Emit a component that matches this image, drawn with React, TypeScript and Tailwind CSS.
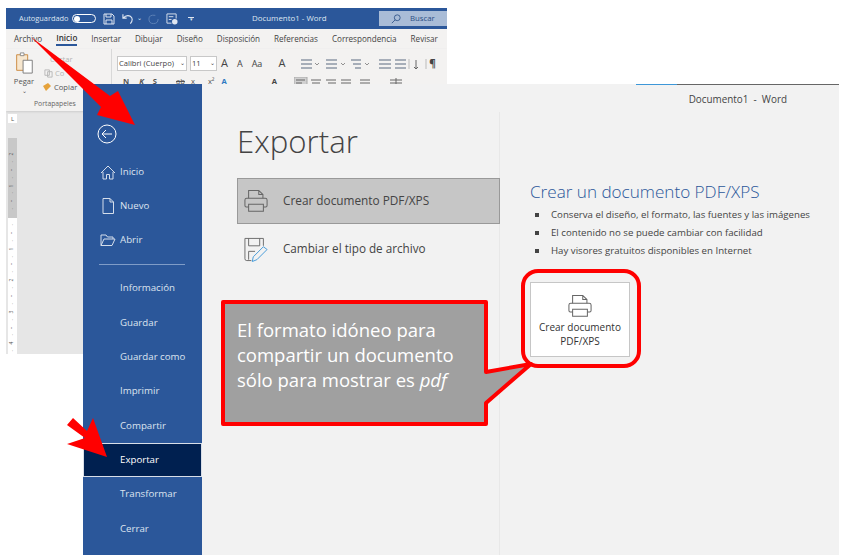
const sans = "font-['Open_Sans','Noto_Sans',sans-serif]";

const tabs = ["Archivo", "Inicio", "Insertar", "Dibujar", "Diseño", "Disposición", "Referencias", "Correspondencia", "Revisar"];
const topItems = [
  { name: "Inicio", icon: <path d="M2 10 L9 3 L16 10 M4 9 V16 H7.5 V11.5 H10.5 V16 H14 V9" /> },
  { name: "Nuevo", icon: <path d="M4 1.5 H11 L14.5 5 V16.5 H4 Z M11 1.5 V5 H14.5" /> },
  { name: "Abrir", icon: <path d="M2 14.5 V4 H7 L8.5 6 H14 V8 M2 14.5 H13 L16 8 H5 L2 14.5" /> },
];
const bottomItems = ["Información", "Guardar", "Guardar como", "Imprimir", "Compartir", "Exportar", "Transformar", "Cerrar"];
const bullets = [
  "Conserva el diseño, el formato, las fuentes y las imágenes",
  "El contenido no se puede cambiar con facilidad",
  "Hay visores gratuitos disponibles en Internet",
];
const rulerMarks = ["2", "·", "–", "·", "1", "·", "–", "·", "", "·", "–", "·", "1", "·", "–", "·", "2", "·", "–", "·", "3", "·", "–", "·", "4", "·"];

function PrinterIcon({ className }: { className: string }) {
  return (
    <svg viewBox="0 0 26 26" fill="none" stroke="#666" strokeWidth="1.1" className={className}>
      <path d="M5 10 V1.5 H16 L20.5 6 V10 M16 1.5 V6 H20.5" />
      <path d="M5 19.5 H2.5 Q1 19.5 1 18 V12 Q1 10 3 10 H23 Q25 10 25 12 V18 Q25 19.5 23.5 19.5 H21" />
      <path d="M5 16.5 H21 V24 H5 Z" />
    </svg>
  );
}

function BackWindow() {
  return (
    <div className={`absolute left-[6px] top-[8px] flex h-[346px] w-[441px] flex-col overflow-hidden bg-[#e6e6e6] ${sans}`}>
      {/* title bar */}
      <div className="flex h-[21px] shrink-0 items-center bg-[#2b579a] pl-[13px] text-[8.1px] text-[#dfe6f1]">
        <span className="w-[53px] text-[7.4px]">Autoguardado</span>
        <span className="flex h-[9px] w-[24px] items-center rounded-full border border-white pl-[1px]">
          <span className="h-[6px] w-[6px] rounded-full bg-white" />
        </span>
        <svg viewBox="0 0 12 12" fill="none" stroke="#dfe6f1" className="ml-[7px] h-[12px] w-[12px]">
          <path d="M1 1 H9 L11 3 V11 H1 Z M3 1 V4 H8 V1 M3 11 V7 H9 V11" />
        </svg>
        <svg viewBox="0 0 14 12" fill="none" stroke="#dfe6f1" strokeWidth="1.2" className="ml-[7px] h-[12px] w-[13px]">
          <path d="M1 1 V5 H5 M1 5 Q5 1 9 3 Q13 6 9 11" />
        </svg>
        <span className="ml-[2px] text-[6px]">⌄</span>
        <svg viewBox="0 0 12 12" fill="none" stroke="#5f83b8" className="ml-[6px] h-[12px] w-[11px]">
          <path d="M8 2 Q1 1 1 6 Q1 11 6 11 Q11 11 11 6" />
        </svg>
        <svg viewBox="0 0 13 13" fill="none" stroke="#dfe6f1" className="ml-[7px] h-[12px] w-[12px]">
          <path d="M1 1 H11 V6 M1 1 V11 H6 M3 4 H8 M3 7 H6" />
          <circle cx="9.5" cy="9.5" r="3" fill="#dfe6f1" stroke="none" />
        </svg>
        <span className="ml-[10px] h-[4px] w-[6px] border-t border-[#dfe6f1] text-center text-[5px] leading-[3px]">▾</span>
        <span className="ml-[58px] w-[127px] text-[7.9px]">Documento1 - Word</span>
        <span className="flex h-[15px] flex-1 items-center bg-[#a9bcd7] pl-[12px] text-[7.8px] text-[#2b4f85]">
          <svg viewBox="0 0 12 12" fill="none" stroke="#2b4f85" className="mr-[9px] h-[10px] w-[10px]">
            <circle cx="7.5" cy="4.5" r="3.5" />
            <path d="M5 7 L1 11" />
          </svg>
          Buscar
        </span>
      </div>
      {/* tabs */}
      <div className="flex h-[20px] shrink-0 items-center gap-[14px] bg-[#f3f2f1] pl-[8px] text-[8.1px] text-[#444]">
        {tabs.map((tab) => (
          <span key={tab} className={tab === "Inicio" ? "border-b-2 border-[#2b579a] font-semibold text-[#333]" : ""}>
            {tab}
          </span>
        ))}
      </div>
      {/* ribbon */}
      <div className="flex h-[62px] shrink-0 bg-[#f3f2f1] shadow-[0_1px_2px_#ccc]">
        <div className="flex w-[106px] shrink-0 flex-col border-r border-[#d8d8d8]">
          <div className="flex h-[50px] pl-[6px] pt-[3px]">
            <div className="flex w-[24px] flex-col items-center text-[7.6px] leading-[10px] text-[#555]">
              <svg viewBox="0 0 20 24" fill="none" className="h-[22px] w-[20px]">
                <path d="M2 3 H14 V20 H2 Z" stroke="#c9873a" fill="#f7e7cf" />
                <path d="M6 1 H10 V4 H6 Z" stroke="#888" fill="#fff" />
                <path d="M9 9 H19 V23 H9 Z" stroke="#777" fill="#fff" />
              </svg>
              <span className="mt-[2px]">Pegar</span>
              <span className="text-[6px]">⌄</span>
            </div>
            <div className="ml-[6px] flex flex-col gap-[4px] pt-[2px] text-[7.6px] leading-[10px] text-[#b5b5b5]">
              <span className="pl-[8px]">Cortar</span>
              <span className="pl-[2px]">
                <svg viewBox="0 0 10 10" fill="none" stroke="#b5b5b5" className="inline h-[9px] w-[9px]">
                  <path d="M1 1 H6 V7 H1 Z M4 3 H9 V9 H4 Z" />
                </svg>{" "}
                Co
              </span>
              <span className="flex items-center text-[#555]">
                <svg viewBox="0 0 10 10" className="mr-[2px] h-[10px] w-[10px]">
                  <path d="M1 4 L6 1 L9 4 L4 9 Z" fill="#e5a23b" />
                </svg>
                Copiar
              </span>
            </div>
          </div>
          <span className="pl-[28px] text-[6.8px] leading-[10px] text-[#666]">Portapapeles</span>
        </div>
        <div className="flex min-w-0 flex-1 flex-col gap-[5px] pl-[5px] pt-[7px]">
          <div className="flex h-[15px] items-center text-[7.6px] text-[#444]">
            <span className="flex h-[15px] w-[70px] shrink-0 items-center justify-between border border-[#c8c8c8] bg-white px-[1px]">
              Calibri (Cuerpo)<span className="text-[6px]">⌄</span>
            </span>
            <span className="ml-[3px] flex h-[15px] w-[27px] shrink-0 items-center justify-between border border-[#c8c8c8] bg-white px-[1px]">
              11<span className="text-[6px]">⌄</span>
            </span>
            <span className="ml-[4px] text-[11px]">A</span>
            <span className="ml-[9px] text-[9px]">A</span>
            <span className="ml-[9px] text-[9px]">Aa</span>
            <span className="ml-[16px] text-[11px]">A</span>
            <svg viewBox="0 0 130 12" fill="none" stroke="#666" className="ml-[13px] h-[12px] w-[130px] shrink-0">
              <path d="M3 2 H14 M3 6 H14 M3 10 H14 M28 2 H39 M28 6 H39 M28 10 H39 M53 2 H63 M55 6 H63 M57 10 H63 M81 2 H93 M81 6 H93 M81 10 H93 M97 2 H108 M97 6 H108 M97 10 H108" stroke="#5b6b80" />
              <path d="M17 5 L19 7 L21 5 M43 5 L45 7 L47 5 M67 5 L69 7 L71 5" strokeWidth="0.7" />
              <path d="M111 1 V11 M128 1 V11" stroke="#bbb" />
              <path d="M118 2 V11 M116 9 L118 11 L120 9" />
            </svg>
            <span className="ml-[1px] text-[10px] font-bold">¶</span>
          </div>
          <div className="flex items-center text-[7.6px] font-bold leading-[10px] text-[#555]">
            <span className="ml-[6px]">N</span>
            <span className="ml-[10px] italic">K</span>
            <span className="ml-[9px] underline">S</span>
            <span className="ml-[19px] font-normal line-through">ab</span>
            <span className="ml-[6px] font-normal">x</span>
            <span className="ml-[13px] font-normal">x²</span>
            <span className="ml-[7px] text-[#2b79c2]">A</span>
            <span className="ml-[45px] text-[#444]">A</span>
            <svg viewBox="0 0 140 8" fill="none" stroke="#666" className="ml-[17px] h-[8px] w-[140px] shrink-0">
              <rect x="0" y="0" width="13" height="8" fill="#d0d0d0" stroke="#aaa" />
              <path d="M2 3 H11 M2 6 H8 M17 3 H27 M18 6 H26 M32 3 H42 M34 6 H42 M47 3 H57 M47 6 H57 M66 3 H76 M66 6 H76 M96 3 H108 M96 6 H108 M102 1 V8" />
            </svg>
          </div>
        </div>
      </div>
      {/* document area */}
      <div className="flex min-h-0 flex-1 flex-col pl-[2px] pt-[3px]">
        <span className="flex h-[9px] w-[9px] items-center justify-center bg-white text-[6px] leading-none text-[#555]">L</span>
        <div className="mt-[15px] flex w-[9px] flex-1 flex-col items-center overflow-hidden bg-[linear-gradient(#c8c8c8_80px,#ffffff_80px)] pt-[12px] text-[5px] leading-[7.9px] text-[#555]">
          {rulerMarks.map((m, i) => (
            <span key={i} className="h-[7.9px] shrink-0 -rotate-90">{m}</span>
          ))}
        </div>
      </div>
    </div>
  );
}

function Sidebar() {
  return (
    <div className="flex w-[119px] shrink-0 flex-col bg-[#2b579a] pt-[40px] text-[9.7px] text-[#dde4ef]">
      <svg viewBox="0 0 20 20" fill="none" stroke="#fff" className="ml-[14px] h-[20px] w-[20px]">
        <circle cx="10" cy="10" r="9" />
        <path d="M15 10 H5 M9 6 L5 10 L9 14" />
      </svg>
      <div className="mt-[11px] flex flex-col">
        {topItems.map((item) => (
          <div key={item.name} className="flex h-[34.2px] items-center pl-[16px]">
            <svg viewBox="0 0 18 18" fill="none" stroke="#d5deeb" className="mr-[3px] h-[18px] w-[18px]">
              {item.icon}
            </svg>
            {item.name}
          </div>
        ))}
      </div>
      <div className="mx-[16px] mb-[7px] mt-[6px] h-px w-[86px] bg-[#7f9cc7]" />
      <div className="flex flex-col">
        {bottomItems.map((name) => (
          <div
            key={name}
            className={`flex h-[34.3px] items-center ${name === "Exportar" ? "border border-[#d8dee8] bg-[#002050] pl-[36px] text-white" : "pl-[37px]"}`}
          >
            {name}
          </div>
        ))}
      </div>
    </div>
  );
}

function ExportPane() {
  return (
    <div className="flex min-w-0 flex-1 flex-col bg-[#f2f2f2]">
      <div className="flex h-[2px] shrink-0 justify-end">
        <span className="h-px w-[41px] bg-[#3d97d8]" />
        <span className="h-px w-[162px] bg-[#666]" />
      </div>
      <div className="flex h-[26px] shrink-0 items-center justify-end pr-[52px] text-[9.9px] text-[#444]">Documento1 &nbsp;-&nbsp; Word</div>
      <div className="flex min-h-0 flex-1">
        <div className="w-[298px] shrink-0 border-r border-[#e8e8e8] pl-[35px]">
          <h1 className="mt-[7px] text-[31.2px] font-light leading-[44px] text-[#444]">Exportar</h1>
          <div className="mt-[15px] flex h-[46px] w-[263px] items-center border border-[#999] bg-[#c6c6c6] pl-[6px] text-[11.8px] text-[#444]">
            <PrinterIcon className="mr-[15px] h-[26px] w-[24px]" />
            Crear documento PDF/XPS
          </div>
          <div className="mt-[2px] flex h-[46px] w-[263px] items-center pl-[7px] text-[11.7px] text-[#444]">
            <svg viewBox="0 0 26 28" fill="none" className="mr-[15px] h-[27px] w-[24px]">
              <path d="M8 26 H3 Q1 26 1 24 V2 H21 V10 M5 2 V10 H17 V2 M5 25 V16 H12" stroke="#666" />
              <path d="M9 27 L10 22 L21 11 L25 14 L14 25 Z" stroke="#3d97d8" fill="#f2f2f2" />
            </svg>
            Cambiar el tipo de archivo
          </div>
        </div>
        <div className="flex-1 pl-[30px] pt-[67px]">
          <h2 className="text-[17.1px] font-light leading-[26px] text-[#2b579a]">Crear un documento PDF/XPS</h2>
          <ul className="mt-[1px] flex flex-col text-[9.66px] leading-[18px] text-[#444]">
            {bullets.map((text) => (
              <li key={text} className="flex items-center">
                <span className="ml-[5px] mr-[12px] h-[4px] w-[4px] bg-[#444]" />
                {text}
              </li>
            ))}
          </ul>
          <button className="mt-[22px] flex h-[75px] w-[100px] flex-col items-center border border-[#c6c6c6] bg-white pt-[11px] text-[10px] leading-[13.5px] text-[#333]">
            <PrinterIcon className="mb-[3px] h-[24px] w-[24px]" />
            <span>Crear documento</span>
            <span>PDF/XPS</span>
          </button>
        </div>
      </div>
    </div>
  );
}

export default function App() {
  return (
    <div className={`relative h-[557px] w-[847px] overflow-hidden bg-white ${sans}`}>
      <BackWindow />
      <div className="absolute left-[83px] top-[84px] flex h-[471px] w-[756px]">
        <Sidebar />
        <ExportPane />
      </div>

      {/* callout, ring and arrows drawn over the window */}
      <svg viewBox="0 0 847 557" fill="none" className="pointer-events-none absolute inset-0 h-[557px] w-[847px]">
        <path
          d="M223 302 H486 V372 L531 364 L486 403 V424 H223 Z"
          fill="#a0a0a0"
          stroke="#ff0000"
          strokeWidth="4"
          strokeLinejoin="round"
        />
        <rect x="523" y="271" width="116" height="95" rx="15" stroke="#ff0000" strokeWidth="4" />
        <path d="M31 37 L110 96 L118 91 L135 125 L97 115 L101 107 Z" fill="#ff0000" />
        <path d="M73 418 L87 431 L93 418 L107 457 L67 444 L85 438 L67 425 Z" fill="#ff0000" />
      </svg>
      <div className="absolute left-[237px] top-[317px] w-[240px] text-[18.5px] font-medium leading-[25px] text-white">
        El formato idóneo para compartir un documento sólo para mostrar es <em>pdf</em>
      </div>
    </div>
  );
}
